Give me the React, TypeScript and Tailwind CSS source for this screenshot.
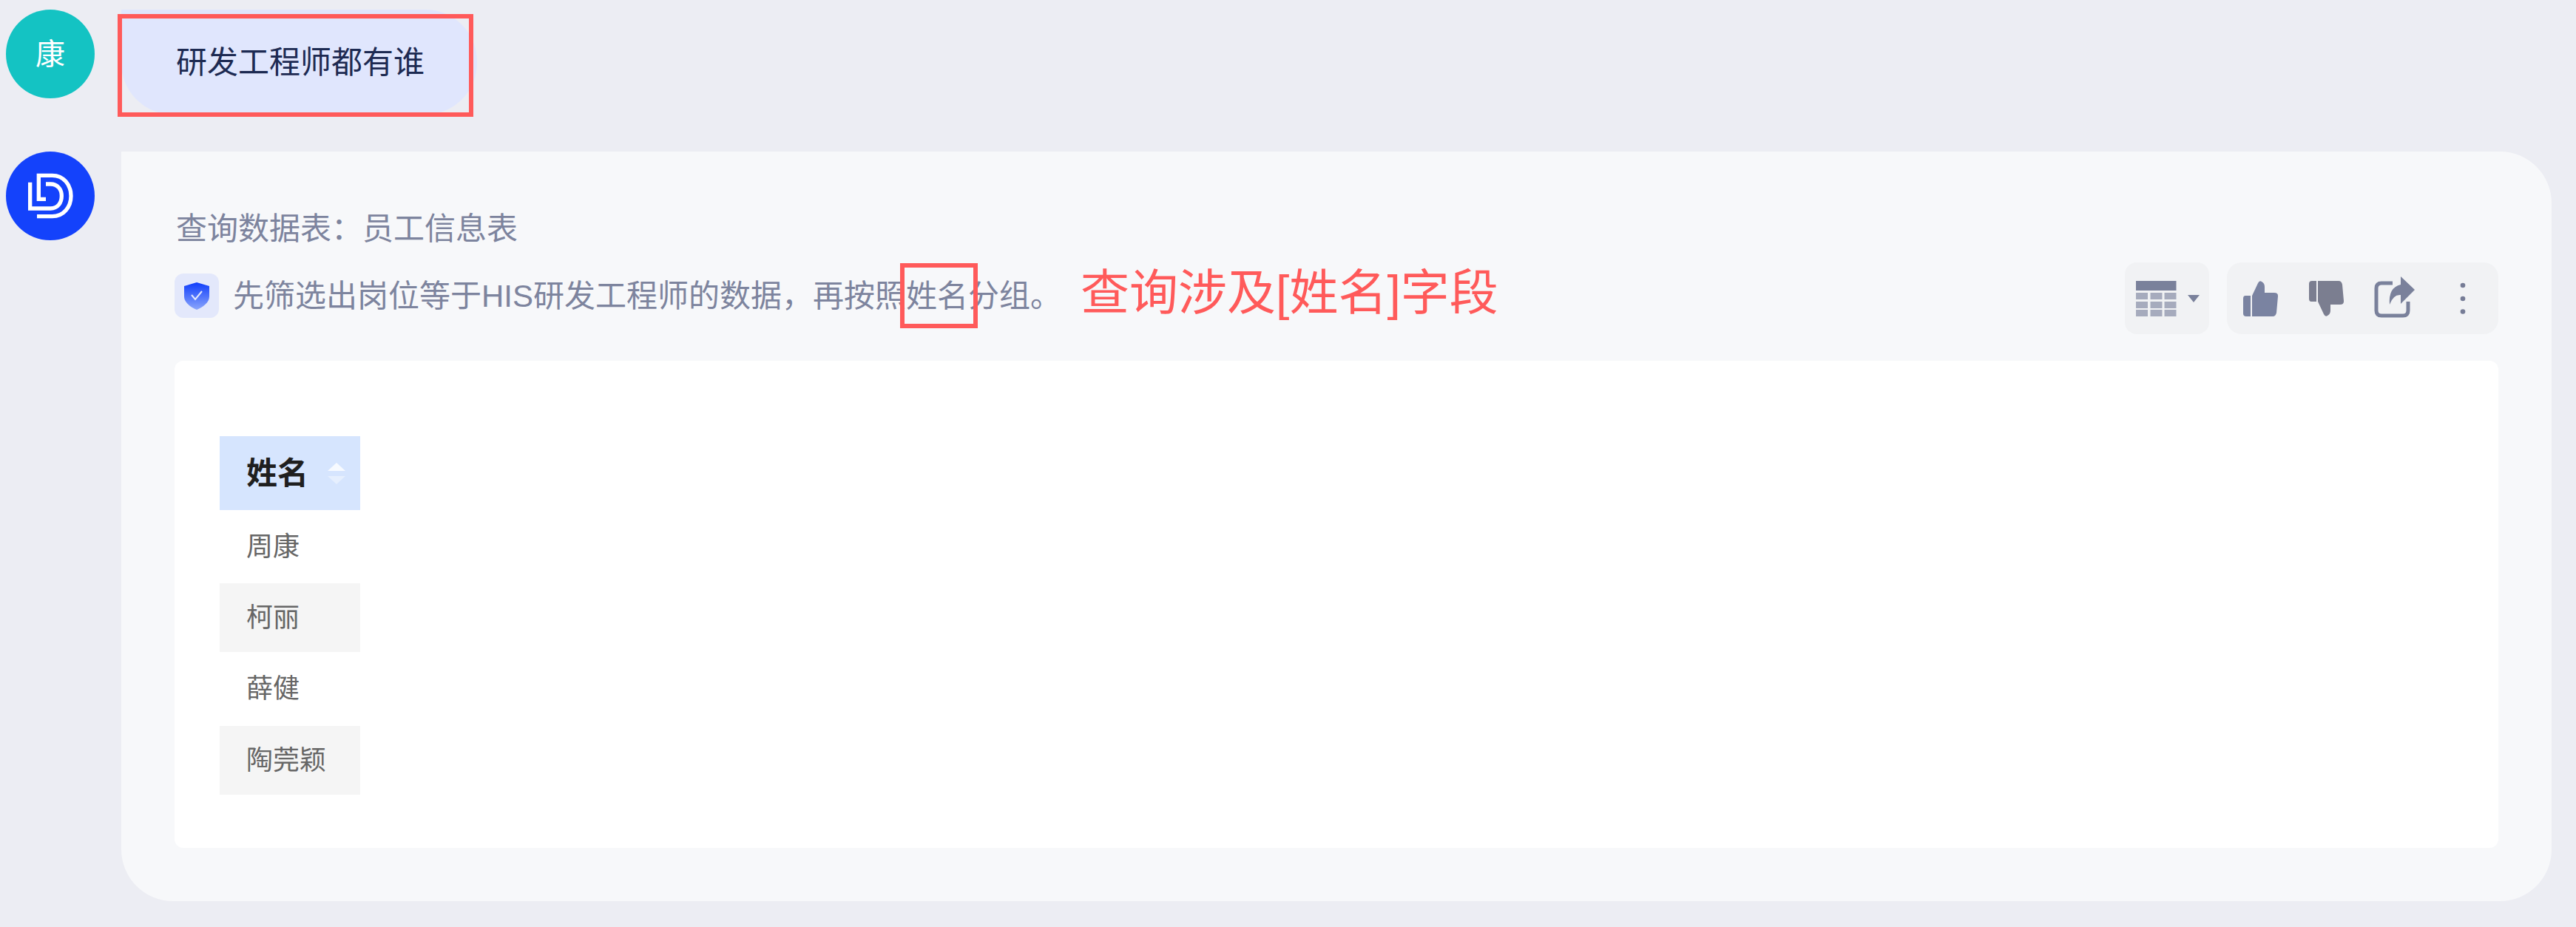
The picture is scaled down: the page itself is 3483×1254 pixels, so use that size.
function LogoD() {
  return (
    <svg width="120" height="120" viewBox="24 45 360 360" fill="none" stroke="#fff" strokeWidth="16">
      <path d="M186 238H157V142H212C258 142 288 180 288 225C288 270 258 308 212 308H150" />
      <path d="M186 177H205C235 177 250 200 250 225C250 252 235 276 205 276H122V170" />
    </svg>
  );
}
function Shield() {
  return (
    <svg width="34" height="37" viewBox="0 0 34 37">
      <defs>
        <linearGradient id="sg" x1="0" y1="0" x2="0" y2="1">
          <stop offset="0" stopColor="#0f3dfb" />
          <stop offset="1" stopColor="#8ba6fb" />
        </linearGradient>
      </defs>
      <path d="M17 0L34 5V19C34 27 26 33 17 37C8 33 0 27 0 19V5Z" fill="url(#sg)" />
      <path d="M10 17L15 23L24 12" fill="none" stroke="#fff" strokeOpacity="0.85" strokeWidth="2" />
    </svg>
  );
}
function TableIcon() {
  const xs = [0, 19.5, 38.5];
  const ys = [16, 28, 39];
  return (
    <svg width="55" height="48" viewBox="0 0 55 48">
      <rect x="0" y="0" width="54.5" height="13" fill="#7a819b" />
      {ys.map((y) =>
        xs.map((x) => <rect key={`${x}-${y}`} x={x} y={y} width="16" height="9" fill="#a6abbd" />)
      )}
    </svg>
  );
}
const thumb = "M12 48V20L20 3Q22 -1 25 1Q29 3 29 8V16H42Q47.5 16 47 21L45 43Q44 48 40 48Z";
const bar = "M3 20H10V48H4Q0 48 0 44V24Q0 20 3 20Z";
function ThumbUp() {
  return (
    <svg width="48" height="48" viewBox="0 0 48 48" fill="#7a83a1">
      <path d={bar} />
      <path d={thumb} />
    </svg>
  );
}
function ThumbDown() {
  return (
    <svg width="48" height="48" viewBox="0 0 48 48" fill="#7b7e90">
      <g transform="translate(0 48) scale(1 -1)">
        <path d={bar} />
        <path d={thumb} />
      </g>
    </svg>
  );
}
function ShareIcon() {
  return (
    <svg width="56" height="56" viewBox="0 0 56 56" fill="none">
      <path d="M25 9H10Q3 9 3 16V46Q3 53 10 53H39Q46 53 46 46V34" stroke="#7a819b" strokeWidth="5" />
      <path d="M36 0L55 18L36 37V25Q26 24 21 38Q19 15 36 11Z" fill="#7a819b" />
    </svg>
  );
}
function Dots() {
  return (
    <svg width="8" height="44" viewBox="0 0 8 44" fill="#767c96">
      <circle cx="4" cy="4" r="3.3" />
      <circle cx="4" cy="22" r="3.3" />
      <circle cx="4" cy="39.5" r="3.3" />
    </svg>
  );
}
const rows = [
  { name: "周康", cls: "h-[99px] bg-white" },
  { name: "柯丽", cls: "h-[93px] bg-[#f5f5f5]" },
  { name: "薛健", cls: "h-[100px] bg-white" },
  { name: "陶莞颖", cls: "h-[93px] bg-[#f5f5f5]" },
];
export default function App() {
  return (
    <div className="w-[3483px] h-[1254px] overflow-hidden bg-[#ecedf3] pt-[13px] pl-2 font-['Liberation_Sans','Noto_Sans_CJK_SC',sans-serif]">
      <div className="flex gap-9">
        <div className="w-[120px] h-[120px] rounded-full bg-[#14c3c3] flex items-center justify-center text-white text-[40px]">康</div>
        <div className="relative">
          <div className="w-[481px] h-[142px] bg-[#e0e6fd] rounded-[0_70px_70px_70px] flex items-center pl-[74px] text-[42px] text-[#1d2a52]">
            研发工程师都有谁
          </div>
          <div className="absolute left-[-5px] top-[6px] w-[481px] h-[139px] border-[6px] border-[#ff5a5a]" />
        </div>
      </div>
      <div className="flex gap-9 mt-[50px]">
        <div className="w-[120px] h-[120px] rounded-full bg-[#1442fb] overflow-hidden">
          <LogoD />
        </div>
        <div className="w-[3286px] h-[1014px] bg-[#f7f8fa] rounded-[0_70px_70px_70px] pt-[82px] px-[72px]">
          <div className="h-[46px] leading-[46px] text-[42px] pl-[2px] text-[#7d849e]">查询数据表：员工信息表</div>
          <div className="mt-[22px] h-[97px] flex justify-between">
            <div className="flex items-center h-[60px] mt-[15px]">
              <div className="w-[60px] h-[60px] rounded-xl bg-[#e3e8fb] flex items-center justify-center shrink-0">
                <Shield />
              </div>
              <div className="relative ml-[19px] text-[42px] text-[#7d849e] whitespace-nowrap">
                先筛选出岗位等于HIS研发工程师的数据，再按照
                <span className="relative">
                  姓名
                  <span className="absolute left-[-8px] top-[-21px] w-[105px] h-[88px] border-[6px] border-[#ff5a5a]" />
                </span>
                分组。
              </div>
              <div className="ml-[26px] -mt-[7px] text-[66px] text-[#ff5a5a] whitespace-nowrap">查询涉及[姓名]字段</div>
            </div>
            <div className="flex gap-6">
              <div className="w-[114px] h-[97px] rounded-2xl bg-[#f1f2f4] flex items-center pl-[15px]">
                <TableIcon />
                <div className="ml-[15px] w-0 h-0 border-l-[8px] border-r-[8px] border-t-[10px] border-l-transparent border-r-transparent border-t-[#7a819b]" />
              </div>
              <div className="w-[367px] h-[97px] rounded-[20px] bg-[#f1f2f4] flex items-center pl-[22px]">
                <ThumbUp />
                <div className="ml-[41px]"><ThumbDown /></div>
                <div className="ml-[40px] -mt-1"><ShareIcon /></div>
                <div className="ml-[60px]"><Dots /></div>
              </div>
            </div>
          </div>
          <div className="mt-9 h-[659px] bg-white rounded-xl pt-[102px] pl-[61px]">
            <div className="w-[190px]">
              <div className="h-[100px] bg-[#d6e5fe] flex items-center pl-[36px] text-[42px] font-bold text-[#1f1f1f]">
                姓名
                <div className="ml-[26px] flex flex-col gap-[7px]">
                  <div className="w-0 h-0 border-l-[12px] border-r-[12px] border-b-[11px] border-l-transparent border-r-transparent border-b-white/80" />
                  <div className="w-0 h-0 border-l-[12px] border-r-[12px] border-t-[11px] border-l-transparent border-r-transparent border-t-white/40" />
                </div>
              </div>
              {rows.map((r) => (
                <div key={r.name} className={`${r.cls} flex items-center pl-[36px] text-[36px] text-[#666666]`}>
                  {r.name}
                </div>
              ))}
            </div>
          </div>
        </div>
      </div>
    </div>
  );
}
